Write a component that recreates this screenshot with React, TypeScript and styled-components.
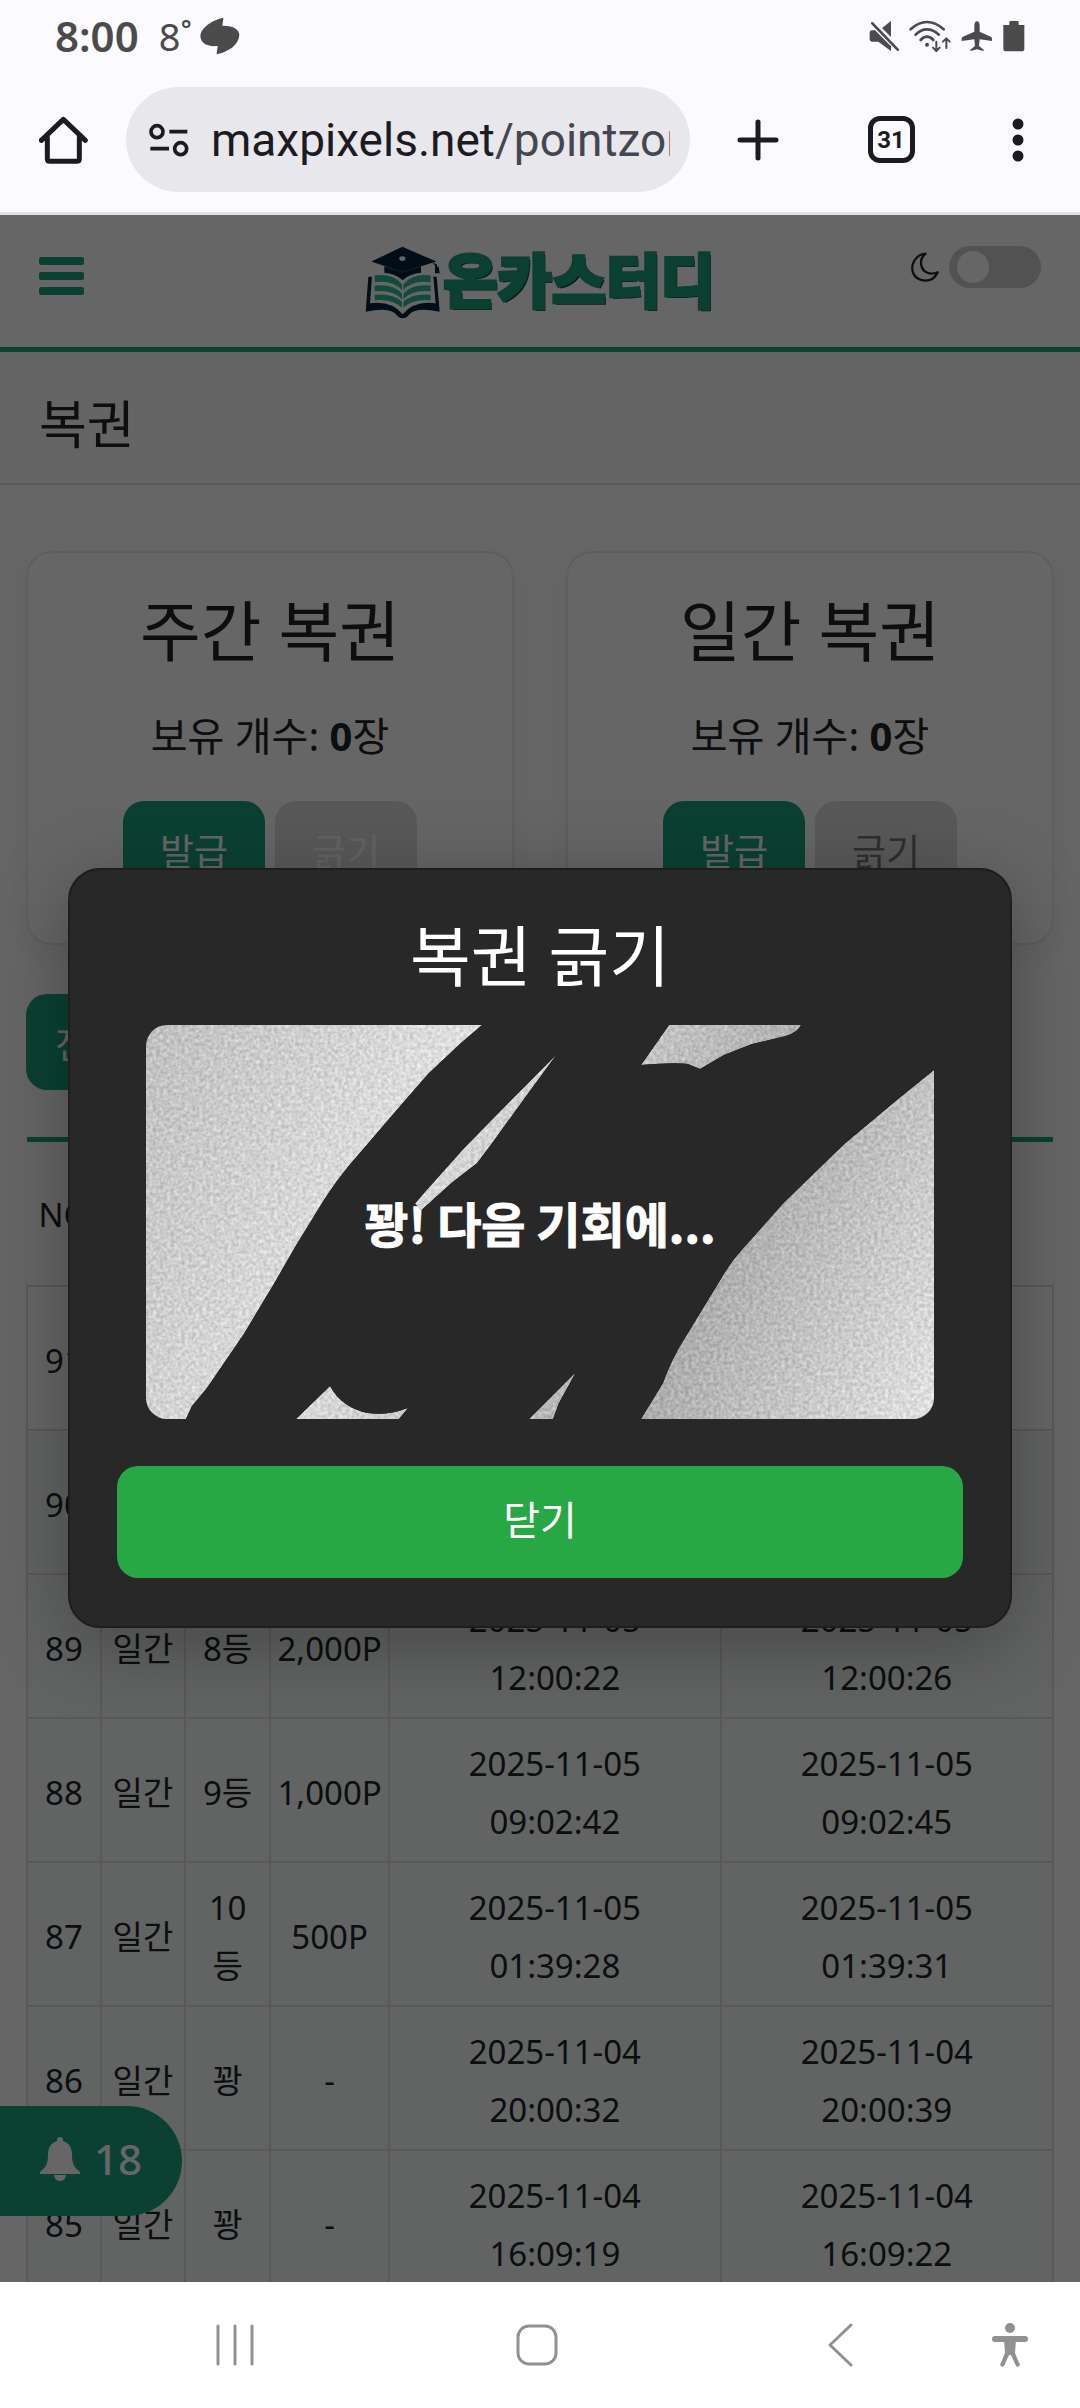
import React from "react";
import styled, { createGlobalStyle } from "styled-components";

const GREEN = "#19a27f";
const INK = "#212529";
const SANS = '"Noto Sans", "Noto Sans CJK KR", sans-serif';

const GlobalStyle = createGlobalStyle`
  *, *::before, *::after { box-sizing: border-box; }
  body { margin: 0; background: #fff; font-family: ${SANS}; color: ${INK}; }
  h1, h2, p { margin: 0; font-weight: 400; }
  button { border: 0; padding: 0; margin: 0; background: none; font: inherit; color: inherit; }
  svg { display: block; flex: none; }
`;

const Screen = styled.div`
  display: flex;
  flex-direction: column;
  height: 100vh;
  overflow: hidden;
`;

/* ---------- device status bar ---------- */

const StatusBar = styled.header`
  display: flex;
  align-items: center;
  justify-content: space-between;
  height: 76px;
  padding: 0 55px 4px;
  background: #fafaff;
  color: #4b4b4b;
`;

const StatusGroup = styled.div<{ $gap: number }>`
  display: flex;
  align-items: center;
  gap: ${(p) => p.$gap}px;
`;

const Clock = styled.span`
  font: 600 42px/48px "Noto Sans", sans-serif;
  margin-right: 12px;
`;

const Temperature = styled.span`
  font: 400 38px/48px "Noto Sans", sans-serif;
`;

/* ---------- browser toolbar ---------- */

const BrowserBar = styled.nav`
  display: grid;
  grid-template-columns: 126px 1fr 136px 130px 124px;
  align-items: center;
  padding: 11px 0 20px;
  background: #fafaff;
  border-bottom: 3px solid #e2e1e8;
  color: #1b1b21;
`;

const BarButton = styled.button`
  display: flex;
  align-items: center;
  justify-content: center;
  height: 105px;
`;

const AddressBar = styled.button`
  display: flex;
  align-items: center;
  gap: 22px;
  min-width: 0;
  height: 105px;
  padding: 0 20px 0 23px;
  border-radius: 53px;
  background: #e8e7ec;
  text-align: left;
`;

const Address = styled.span`
  flex: 1;
  min-width: 0;
  overflow: hidden;
  white-space: nowrap;
  font: 400 46px/60px Roboto, sans-serif;
`;

const AddressPath = styled.span`
  color: #45464f;
`;

const TabCount = styled.span`
  display: flex;
  align-items: center;
  justify-content: center;
  width: 47px;
  height: 47px;
  border: 5px solid #1b1b21;
  border-radius: 12px;
  font: 700 24px/28px Roboto, sans-serif;
`;

/* ---------- web page ---------- */

const Viewport = styled.div`
  position: relative;
  flex: 1;
  min-height: 0;
  overflow: hidden;
  background: #fff;
`;

const SiteHeader = styled.header`
  display: grid;
  grid-template-columns: 1fr auto 1fr;
  align-items: start;
  padding: 31px 39px 28px;
  border-bottom: 5px solid ${GREEN};
`;

const MenuButton = styled.button`
  display: flex;
  flex-direction: column;
  gap: 7px;
  width: 45px;
  padding: 11px 0;
`;

const MenuLine = styled.span`
  height: 8px;
  border-radius: 2px;
  background: ${GREEN};
`;

const Logo = styled.a`
  display: flex;
  align-items: flex-start;
  gap: 2px;
  text-decoration: none;
`;

const LogoText = styled.span`
  font: 900 59px/64px "Noto Sans CJK KR", sans-serif;
  color: ${GREEN};
  -webkit-text-stroke: 3px #219b7d;
  text-shadow: 2px 2px 0 #0b3b2c;
`;

const ThemeSwitch = styled.label`
  justify-self: end;
  display: flex;
  align-items: center;
  gap: 10px;
`;

const SwitchInput = styled.input`
  appearance: none;
  display: flex;
  align-items: center;
  width: 92px;
  height: 42px;
  margin: 0;
  padding: 0 8px;
  border-radius: 21px;
  background: #ccc;

  &::before {
    content: "";
    width: 32px;
    height: 32px;
    border-radius: 50%;
    background: #fff;
  }
`;

const PageTitle = styled.h1`
  padding: 33px 39px 21px;
  background: #fcfcfc;
  border-bottom: 2px solid #dee2e6;
  font-size: 52px;
  line-height: 77px;
`;

const Content = styled.main`
  padding: 66px 26px 0;
`;

const Cards = styled.section`
  display: grid;
  grid-template-columns: 1fr 1fr;
  gap: 52px;
`;

const Card = styled.article`
  display: flex;
  flex-direction: column;
  align-items: center;
  padding: 37px 20px 46px;
  border: 2px solid #ececec;
  border-radius: 26px;
  background: #fff;
  box-shadow: 0 10px 30px rgba(0, 0, 0, 0.05);
`;

const CardTitle = styled.h2`
  font-size: 66px;
  line-height: 80px;
`;

const CardCount = styled.p`
  margin: 36px 0 35px;
  font-size: 40px;
  line-height: 60px;
`;

const CardActions = styled.div`
  display: flex;
  gap: 10px;
`;

const ActionButton = styled.button<{ $tone: "green" | "faded" | "gray" }>`
  height: 96px;
  padding: 6px 37px 0;
  border-radius: 21px;
  font-size: 37px;
  line-height: 56px;
  background: ${(p) => (p.$tone === "green" ? GREEN : "#dedede")};
  color: ${(p) => (p.$tone === "green" ? "#fff" : p.$tone === "faded" ? "#f8f8f8" : "#74777a")};
`;

const FilterRow = styled.div`
  display: flex;
  margin: 49px 0 47px;
`;

const FilterButton = styled.button`
  height: 96px;
  padding: 6px 29px 0;
  border-radius: 21px;
  background: ${GREEN};
  color: #fff;
  font-size: 37px;
  line-height: 56px;
`;

const History = styled.table`
  width: 100%;
  table-layout: fixed;
  border-collapse: collapse;
  font-size: 33px;
  line-height: 58px;
  text-align: center;
`;

const HeadCell = styled.th`
  padding: 44px 0 41px;
  border-top: 5px solid ${GREEN};
  font-weight: 400;
`;

const Row = styled.tr<{ $tinted: boolean }>`
  background: ${(p) => (p.$tinted ? "#f4f9f7" : "#fff")};
`;

const Cell = styled.td`
  height: 144px;
  padding: 16px 6px 10px;
  border: 2px solid #dfdfdf;
`;

const DateCell = styled(Cell)`
  padding-left: 40px;
  padding-right: 40px;
`;

const NoticeButton = styled.button`
  position: absolute;
  left: 0;
  bottom: 66px;
  display: flex;
  align-items: center;
  gap: 14px;
  height: 110px;
  padding: 0 40px 4px;
  border-radius: 0 55px 55px 0;
  background: ${GREEN};
  color: #fff;
  font-size: 42px;
  line-height: 60px;
  font-weight: 500;
`;

/* ---------- scratch dialog ---------- */

const Overlay = styled.div`
  position: absolute;
  inset: 0;
  display: flex;
  align-items: center;
  justify-content: center;
  padding: 0 68px 2px;
  background: rgba(0, 0, 0, 0.6);
`;

const Dialog = styled.section`
  display: flex;
  flex-direction: column;
  align-items: center;
  width: 100%;
  padding: 48px 47px;
  border: 2px solid #1e1e1e;
  border-radius: 32px;
  background: #282828;
  color: #fff;
  box-shadow: 0 16px 80px rgba(0, 0, 0, 0.3);
`;

const DialogTitle = styled.h2`
  margin-bottom: 33px;
  font-size: 66px;
  line-height: 74px;
`;

const Ticket = styled.div`
  position: relative;
  display: flex;
  align-items: center;
  justify-content: center;
  width: 100%;
  max-width: 788px;
  aspect-ratio: 2 / 1;
  overflow: hidden;
  border-radius: 21px;
`;

const TicketResult = styled.p`
  font: 700 48px/60px "Noto Sans CJK KR", sans-serif;
  -webkit-text-stroke: 1px #fff;
`;

const Foil = styled.svg`
  position: absolute;
  inset: 0;
  width: 100%;
  height: 100%;
`;

const CloseButton = styled.button`
  width: 100%;
  height: 112px;
  margin-top: 47px;
  padding-bottom: 4px;
  border-radius: 21px;
  background: #28a745;
  color: #fff;
  font-size: 40px;
  line-height: 60px;
`;

/* ---------- device navigation ---------- */

const DeviceNav = styled.nav`
  display: grid;
  grid-template-columns: 1fr 1fr 1fr 38px;
  align-items: center;
  justify-items: center;
  height: 126px;
  padding: 0 51px 0 84px;
  background: #fff;
  color: #919191;
`;

const NavButton = styled.button`
  display: flex;
  align-items: center;
  justify-content: center;
  height: 80px;
`;

type Entry = { no: number; rank: string; point: string; issued: string; used: string };

const entries: Entry[] = [
  { no: 91, rank: "꽝", point: "-", issued: "2025-11-05 20:00:10", used: "2025-11-05 20:00:14" },
  { no: 90, rank: "꽝", point: "-", issued: "2025-11-05 16:00:18", used: "2025-11-05 16:00:21" },
  { no: 89, rank: "8등", point: "2,000P", issued: "2025-11-05 12:00:22", used: "2025-11-05 12:00:26" },
  { no: 88, rank: "9등", point: "1,000P", issued: "2025-11-05 09:02:42", used: "2025-11-05 09:02:45" },
  { no: 87, rank: "10 등", point: "500P", issued: "2025-11-05 01:39:28", used: "2025-11-05 01:39:31" },
  { no: 86, rank: "꽝", point: "-", issued: "2025-11-04 20:00:32", used: "2025-11-04 20:00:39" },
  { no: 85, rank: "꽝", point: "-", issued: "2025-11-04 16:09:19", used: "2025-11-04 16:09:22" },
];

const columns = [
  { label: "NO", width: "7.2%" },
  { label: "구분", width: "8.2%" },
  { label: "등수", width: "8.3%" },
  { label: "포인트", width: "11.6%" },
  { label: "발급일", width: "32.3%" },
  { label: "사용일", width: "32.4%" },
];

const LeafIcon = () => (
  <svg width="40" height="38" viewBox="476 55 120 114" fill="currentColor">
    <path d="M546 57 543 81C576 80 594 92 594 110 592 140 560 160 526 167L529 142C495 145 477 133 477 110 480 85 515 63 546 57Z" />
  </svg>
);

const MuteIcon = () => (
  <svg width="30" height="32" viewBox="88 61 90 96" fill="currentColor">
    <path d="M154 64 127 85 154 112Z" />
    <path d="M97 92H106L154 140V154L116 126H97Q90 126 90 119V99Q90 92 97 92Z" />
    <path d="M98 71 174 150" stroke="currentColor" strokeWidth="8" strokeLinecap="round" />
  </svg>
);

const WifiIcon = () => (
  <svg width="42" height="32" viewBox="218 61 126 96" fill="none" stroke="currentColor" strokeWidth="8" strokeLinecap="round" strokeLinejoin="round">
    <path d="M223 89Q246 67 272 67T322 89M238 105Q253 89 272 89T307 105M253 121Q262 111 272 111T291 121" />
    <path d="M300 126V152M290 144 300 154 310 144M330 145V117M320 126 330 116 340 126" strokeWidth="6" />
    <circle cx="272" cy="135" r="6" fill="currentColor" stroke="none" />
  </svg>
);

const PlaneIcon = () => (
  <svg width="32" height="32" viewBox="362 61 96 96" fill="currentColor">
    <path d="M410 65Q418 65 418 79V96L451 111Q455 113 455 117V124L418 119 416 139 430 150V154L410 149 390 154V150L404 139 402 119 364 124V117Q364 113 368 111L402 96V79Q402 65 410 65Z" />
  </svg>
);

const BatteryIcon = () => (
  <svg width="22" height="32" viewBox="491 61 66 96" fill="currentColor">
    <path d="M510 76V68Q510 64 514 64H534Q538 64 538 68V76H555V147Q555 155 547 155H500Q492 155 492 147V76Z" />
  </svg>
);

const HomeIcon = () => (
  <svg width="49" height="48" viewBox="-3 346 147 144" fill="none" stroke="currentColor" strokeWidth="15" strokeLinejoin="round" strokeLinecap="round">
    <path d="M4 419 70 356 136 419M22 410V474Q22 482 30 482H110Q118 482 118 474V410" />
  </svg>
);

const SiteInfoIcon = () => (
  <svg width="40" height="34" viewBox="326 367 120 102" fill="none" stroke="currentColor" strokeWidth="11">
    <circle cx="350" cy="393" r="18" />
    <circle cx="421" cy="444" r="18" />
    <path d="M387 393H441M330 444H386" />
  </svg>
);

const PlusIcon = () => (
  <svg width="44" height="44" viewBox="0 0 44 44" stroke="currentColor" strokeWidth="5" strokeLinecap="round">
    <path d="M22 4V40M4 22H40" />
  </svg>
);

const DotsIcon = () => (
  <svg width="12" height="44" viewBox="0 0 12 44" fill="currentColor">
    <circle cx="6" cy="6" r="5.5" />
    <circle cx="6" cy="22" r="5.5" />
    <circle cx="6" cy="38" r="5.5" />
  </svg>
);

const pageHalf = (
  <>
    <path d="M105 133Q162 128 187 160V178Q160 146 105 154Z" />
    <path d="M105 164Q160 158 187 188V205Q160 176 105 181Z" />
    <path d="M105 192Q158 186 187 213V230Q158 203 105 208Z" />
  </>
);

const LogoMark = () => (
  <svg width="76" height="73" viewBox="76 46 228 218">
    <g fill="#05253a">
      <path d="M188 48 290 92 188 124 95 92Z" />
      <path d="M134 106V126Q166 128 189 148 212 128 244 126V106L188 124Z" />
      <path d="M278 94 292 101V112H286V104Z" />
      <path d="M286 108H297L300 127H286Z" />
      <path d="M86 138H97L91 217Q155 208 189 250 223 208 288 217L281 138H291L300 243Q235 228 212 247 189 278 166 247 143 228 78 243Z" />
    </g>
    <ellipse cx="188" cy="83" rx="9" ry="7" fill="#fff" />
    <g fill="#30b893">
      {pageHalf}
      <g transform="translate(378 0) scale(-1 1)">{pageHalf}</g>
    </g>
  </svg>
);

const MoonIcon = () => (
  <svg width="28" height="30" viewBox="62 60 86 90" fill="none" stroke={INK} strokeWidth="7" strokeLinejoin="round">
    <path d="M107 64C76 66 60 98 68 122 80 153 128 157 144 121 120 131 101 121 95 105 89 87 97 72 107 64Z" />
  </svg>
);

const BellIcon = () => (
  <svg width="40" height="44" viewBox="0 0 40 44" fill="currentColor">
    <path d="M20 0c2 0 3 1 3 4 7 2 9 8 9 14 0 10 3 13 8 17v2H0v-2c5-4 8-7 8-17 0-6 2-12 9-14 0-3 1-4 3-4zM14 38a6 6 0 0 0 12 0z" />
  </svg>
);

const TicketFoil = () => (
  <Foil viewBox="0 0 788 393" preserveAspectRatio="none" aria-hidden="true">
    <defs>
      <linearGradient id="foil" gradientUnits="userSpaceOnUse" x1="0" y1="0" x2="788" y2="393">
        <stop offset="0" stopColor="#bfbfbf" />
        <stop offset="0.32" stopColor="#dedede" />
        <stop offset="0.7" stopColor="#acacac" />
        <stop offset="1" stopColor="#e2e2e2" />
      </linearGradient>
      <filter id="grain" x="0" y="0" width="100%" height="100%" colorInterpolationFilters="sRGB">
        <feTurbulence type="fractalNoise" baseFrequency="0.28" numOctaves="2" seed="4" result="noise" />
        <feColorMatrix in="noise" type="matrix" values="0.5 0 0 0 0.25  0.5 0 0 0 0.25  0.5 0 0 0 0.25  0 0 0 0 1" result="mid" />
        <feComposite in="SourceGraphic" in2="mid" operator="arithmetic" k1="0" k2="1" k3="0.55" k4="-0.275" result="mixed" />
        <feComposite in="mixed" in2="SourceGraphic" operator="in" />
      </filter>
    </defs>
    <g fill="url(#foil)" filter="url(#grain)">
      <path d="M0 0H336L315 18 282 49 254 81 205 138C195 150 186 162 177 176L150 220 128 258 98 308 61 362 46 380 40 393H0Z" />
      <path d="M411 29 367 73 318 123 282 163 269 178 275 185 306 157 331 138 346 118 380 71Z" />
      <path d="M523 0 495 40Q530 37 542 39L554 44 578 30 606 19 640 11Q652 7 655 0Z" />
      <path d="M788 45 753 73 698 119 637 178 597 223Q585 236 575 253L533 322Q524 338 517 357L495 393H788Z" />
      <path d="M184 360 150 393H253L262 382Q240 390 222 387 196 382 184 360Z" />
      <path d="M430 346 383 393H407L413 377Z" />
    </g>
  </Foil>
);

export default function App() {
  return (
    <Screen>
      <GlobalStyle />
      <StatusBar>
        <StatusGroup $gap={8}>
          <Clock>8:00</Clock>
          <Temperature>8˚</Temperature>
          <LeafIcon />
        </StatusGroup>
        <StatusGroup $gap={10}>
          <MuteIcon />
          <WifiIcon />
          <PlaneIcon />
          <BatteryIcon />
        </StatusGroup>
      </StatusBar>
      <BrowserBar>
        <BarButton aria-label="홈">
          <HomeIcon />
        </BarButton>
        <AddressBar>
          <SiteInfoIcon />
          <Address>
            maxpixels.net<AddressPath>/pointzone</AddressPath>
          </Address>
        </AddressBar>
        <BarButton aria-label="새 탭">
          <PlusIcon />
        </BarButton>
        <BarButton aria-label="탭">
          <TabCount>31</TabCount>
        </BarButton>
        <BarButton aria-label="더보기">
          <DotsIcon />
        </BarButton>
      </BrowserBar>

      <Viewport>
        <SiteHeader>
          <MenuButton aria-label="메뉴">
            <MenuLine />
            <MenuLine />
            <MenuLine />
          </MenuButton>
          <Logo href="#">
            <LogoMark />
            <LogoText>온카스터디</LogoText>
          </Logo>
          <ThemeSwitch>
            <MoonIcon />
            <SwitchInput type="checkbox" role="switch" aria-label="다크 모드" />
          </ThemeSwitch>
        </SiteHeader>
        <PageTitle>복권</PageTitle>
        <Content>
          <Cards>
            <Card>
              <CardTitle>주간 복권</CardTitle>
              <CardCount>
                보유 개수: <b>0</b>장
              </CardCount>
              <CardActions>
                <ActionButton $tone="green">발급</ActionButton>
                <ActionButton $tone="faded">긁기</ActionButton>
              </CardActions>
            </Card>
            <Card>
              <CardTitle>일간 복권</CardTitle>
              <CardCount>
                보유 개수: <b>0</b>장
              </CardCount>
              <CardActions>
                <ActionButton $tone="green">발급</ActionButton>
                <ActionButton $tone="gray">긁기</ActionButton>
              </CardActions>
            </Card>
          </Cards>
          <FilterRow>
            <FilterButton>전체</FilterButton>
          </FilterRow>
          <History>
            <colgroup>
              {columns.map((c) => (
                <col key={c.label} style={{ width: c.width }} />
              ))}
            </colgroup>
            <thead>
              <tr>
                {columns.map((c) => (
                  <HeadCell key={c.label} scope="col">
                    {c.label}
                  </HeadCell>
                ))}
              </tr>
            </thead>
            <tbody>
              {entries.map((e, i) => (
                <Row key={e.no} $tinted={i > 0}>
                  <Cell>{e.no}</Cell>
                  <Cell>일간</Cell>
                  <Cell>{e.rank}</Cell>
                  <Cell>{e.point}</Cell>
                  <DateCell>{e.issued}</DateCell>
                  <DateCell>{e.used}</DateCell>
                </Row>
              ))}
            </tbody>
          </History>
        </Content>
        <NoticeButton>
          <BellIcon />
          18
        </NoticeButton>
        <Overlay>
          <Dialog role="dialog" aria-modal="true" aria-labelledby="scratch-title">
            <DialogTitle id="scratch-title">복권 긁기</DialogTitle>
            <Ticket>
              <TicketResult>꽝! 다음 기회에...</TicketResult>
              <TicketFoil />
            </Ticket>
            <CloseButton>닫기</CloseButton>
          </Dialog>
        </Overlay>
      </Viewport>

      <DeviceNav>
        <NavButton aria-label="최근 앱">
          <svg width="40" height="42" viewBox="0 0 40 42" stroke="currentColor" strokeWidth="3" strokeLinecap="round">
            <path d="M3 2V40M20 2V40M37 2V40" />
          </svg>
        </NavButton>
        <NavButton aria-label="홈 화면">
          <svg width="42" height="42" viewBox="0 0 42 42" fill="none" stroke="currentColor" strokeWidth="3">
            <rect x="2" y="2" width="38" height="38" rx="11" />
          </svg>
        </NavButton>
        <NavButton aria-label="뒤로">
          <svg width="26" height="44" viewBox="0 0 26 44" fill="none" stroke="currentColor" strokeWidth="3" strokeLinecap="round" strokeLinejoin="round">
            <path d="M24 2 3 22 24 42" />
          </svg>
        </NavButton>
        <NavButton aria-label="접근성">
          <svg width="36" height="44" viewBox="0 0 36 44" fill="currentColor">
            <circle cx="18" cy="5" r="5" />
            <rect y="13" width="36" height="6" rx="3" />
            <path d="M12 17H24L23 30 28 42Q26 45 24 43L19 32H17L12 43Q10 45 8 42L13 30Z" />
          </svg>
        </NavButton>
      </DeviceNav>
    </Screen>
  );
}
